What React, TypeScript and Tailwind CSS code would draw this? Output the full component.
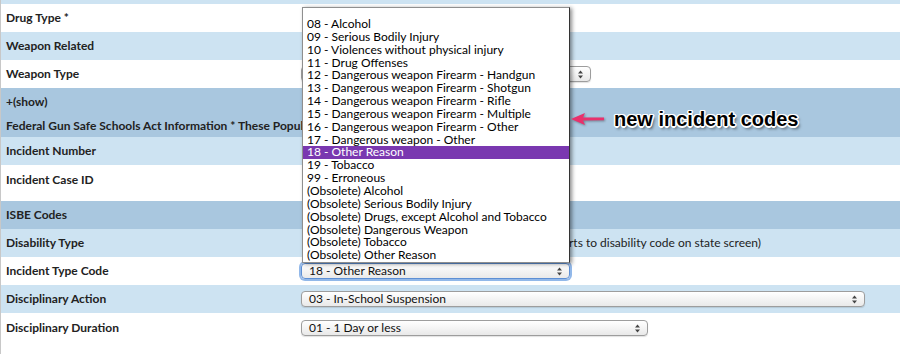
import type { ReactNode } from 'react'

const light = 'bg-[#cde3f2]'
const dark = 'bg-[#a9c7df]'

const incidentCodes = [
  '08 - Alcohol',
  '09 - Serious Bodily Injury',
  '10 - Violences without physical injury',
  '11 - Drug Offenses',
  '12 - Dangerous weapon Firearm - Handgun',
  '13 - Dangerous weapon Firearm - Shotgun',
  '14 - Dangerous weapon Firearm - Rifle',
  '15 - Dangerous weapon Firearm - Multiple',
  '16 - Dangerous weapon Firearm - Other',
  '17 - Dangerous weapon - Other',
  '18 - Other Reason',
  '19 - Tobacco',
  '99 - Erroneous',
  '(Obsolete) Alcohol',
  '(Obsolete) Serious Bodily Injury',
  '(Obsolete) Drugs, except Alcohol and Tobacco',
  '(Obsolete) Dangerous Weapon',
  '(Obsolete) Tobacco',
  '(Obsolete) Other Reason',
]

function Arrows() {
  return (
    <svg width="7" height="9" viewBox="0 0 7 9" className="shrink-0">
      <path d="M3.5 0.5 L6 3.5 H1 Z" fill="#444" />
      <path d="M3.5 8.5 L6 5.5 H1 Z" fill="#444" />
    </svg>
  )
}

function Select({
  value,
  width,
  focused = false,
}: {
  value: string
  width: string
  focused?: boolean
}) {
  return (
    <div
      className={`flex items-center justify-between h-[16px] pl-[7px] pr-[6px] rounded-[4px] border bg-gradient-to-b from-white to-[#e9e9e9] text-[12px] leading-[14px] text-[#111] ${width} ${
        focused
          ? 'border-[#5d8fd4] shadow-[0_0_0_2px_rgba(110,160,225,0.75)]'
          : 'border-[#9d9d9d] shadow-[0_1px_1px_rgba(0,0,0,0.12)]'
      }`}
    >
      <span className="whitespace-nowrap">{value}</span>
      <Arrows />
    </div>
  )
}

function Row({
  label,
  bg,
  height,
  children,
  top = false,
}: {
  label: ReactNode
  bg: string
  height: string
  children?: ReactNode
  top?: boolean
}) {
  return (
    <div className={`flex ${bg} ${height} ${top ? 'items-start pt-[6px]' : 'items-center'}`}>
      <div className="w-[300px] shrink-0 pl-[5px] font-bold text-[12px] text-[#222] whitespace-nowrap">
        {label}
      </div>
      <div className="flex-1 flex items-center">{children}</div>
    </div>
  )
}

export default function App() {
  return (
    <div className="relative w-[900px] h-[354px] overflow-hidden bg-white border-l border-[#c8c8c8] font-['Lato',sans-serif]">
      <div className={`h-[4px] ${light}`} />
      <Row label="Drug Type *" bg="bg-white" height="h-[28px]" />
      <Row label="Weapon Related" bg={light} height="h-[28px]" />
      <Row label="Weapon Type" bg="bg-white" height="h-[28px]">
        <Select value="" width="w-[290px]" />
      </Row>

      {/* show / federal section header */}
      <div className={`${dark} h-[49px] pl-[5px] font-bold text-[12px] text-[#222] whitespace-nowrap`}>
        <div className="h-[26px] flex items-center pt-[2px]">+(show)</div>
        <div className="h-[23px] flex items-center">
          Federal Gun Safe Schools Act Information * These Populate from the Incident
        </div>
      </div>

      <Row label="Incident Number" bg={light} height="h-[28px]" />
      <Row label="Incident Case ID" bg="bg-white" height="h-[36px]" top />
      <Row label="ISBE Codes" bg={dark} height="h-[28px]" />
      <Row label="Disability Type" bg={light} height="h-[28px]">
        <div className="w-[460px] text-right text-[12px] text-[#222] whitespace-nowrap">
          (Converts to disability code on state screen)
        </div>
      </Row>
      <Row label="Incident Type Code" bg="bg-white" height="h-[28px]">
        <Select value="18 - Other Reason" width="w-[269px]" focused />
      </Row>
      <Row label="Disciplinary Action" bg={light} height="h-[28px]">
        <Select value="03 - In-School Suspension" width="w-[564px]" />
      </Row>
      <Row label="Disciplinary Duration" bg="bg-white" height="h-[41px]" top>
        <div className="pt-[1px]">
          <Select value="01 - 1 Day or less" width="w-[347px]" />
        </div>
      </Row>

      {/* open dropdown list */}
      <div className="absolute left-[301px] top-[7px] w-[268px] h-[256px] bg-white border border-[#8f8f8f] border-r-[#333] shadow-[2px_1px_4px_rgba(0,0,0,0.45)] pt-[10px] text-[12px] text-black overflow-hidden">
        {incidentCodes.map((code) => (
          <div
            key={code}
            className={`h-[12.85px] leading-[12.85px] pl-[4px] whitespace-nowrap ${
              code === '18 - Other Reason' ? 'bg-[#7a38b0] text-white' : ''
            }`}
          >
            {code}
          </div>
        ))}
      </div>

      {/* annotation */}
      <div className="absolute left-[569px] top-[104px] flex items-center gap-[9px]">
        <svg width="35" height="16" viewBox="0 0 35 16" className="drop-shadow-[1px_1px_1px_rgba(0,0,0,0.35)]">
          <path d="M1 8 L15 2 L13 6.6 L34 6.4 L34 9.2 L13 9.4 L15 14 Z" fill="#e8316c" />
        </svg>
        <span className="font-['Liberation_Sans',sans-serif] font-bold text-[20px] text-black [text-shadow:1.5px_0_0_#fff,-1.5px_0_0_#fff,0_1.5px_0_#fff,0_-1.5px_0_#fff,1px_1px_0_#fff,-1px_-1px_0_#fff,1px_-1px_0_#fff,-1px_1px_0_#fff,2px_3px_3px_rgba(0,0,0,0.55)]">
          new incident codes
        </span>
      </div>
    </div>
  )
}
